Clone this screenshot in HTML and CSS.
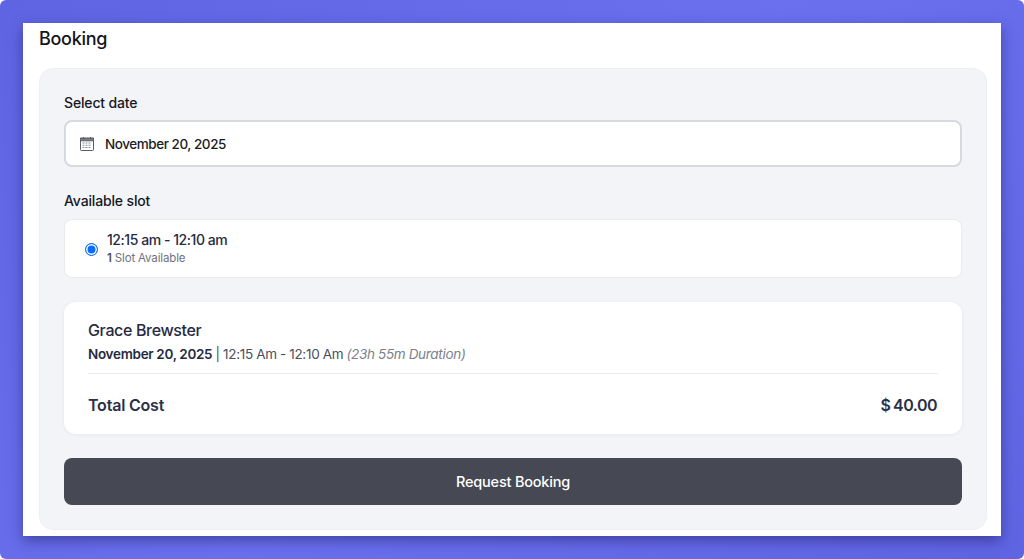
FILE: index.html
```html
<!DOCTYPE html>
<html lang="en">
<head>
<meta charset="utf-8">
<title>Booking</title>
<link rel="stylesheet" href="styles.css">
</head>
<body>
<div class="stage">
  <main class="sheet">
    <h1 class="title">Booking</h1>
    <section class="panel">
      <label class="label">Select date</label>
      <div class="date-input">
        <svg class="cal" viewBox="0 0 14 14" width="14" height="14" aria-hidden="true">
          <rect x="0.5" y="1.2" width="13" height="12.3" rx="0.8" fill="#fff" stroke="#5c5f68"/>
          <rect x="0.5" y="1.2" width="13" height="2.6" fill="#7b7e87" stroke="#5c5f68"/>
          <path d="M3.5 0v2M10.500 0v2" stroke="#5c5f68"/>
          <path d="M2.500 6h9M2.500 8.200h9M2.500 10.500h9" stroke="#8a8d95" stroke-width="1.100" stroke-dasharray="2 1"/>
        </svg>
        <span>November 20, 2025</span>
      </div>
      <label class="label label-slot">Available slot</label>
      <div class="slot">
        <span class="radio"></span>
        <div class="slot-text">
          <div class="slot-time">12:15 am - 12:10 am</div>
          <div class="slot-count"><b>1</b> Slot Available</div>
        </div>
      </div>
      <div class="summary">
        <div class="name">Grace Brewster</div>
        <div class="when"><b>November 20, 2025</b> | 12:15 Am - 12:10 Am <i>(23h 55m Duration)</i></div>
        <div class="total">
          <span>Total Cost</span>
          <span class="price">$ 40.00</span>
        </div>
      </div>
      <button class="submit" type="button">Request Booking</button>
    </section>
  </main>
</div>
</body>
</html>
```

FILE: styles.css
```css
* { box-sizing: border-box; }
html, body { margin: 0; height: 100%; background: #fff; }
body { overflow: hidden; font-family: "Inter", "Liberation Sans", sans-serif; }
.stage {
  height: 559px;
  padding: 23px;
  border-radius: 6px;
  background: linear-gradient(135deg, #5f64e2 0%, #6a70ee 50%, #5f64e2 100%);
}
.sheet {
  height: 513px;
  background: #fff;
  padding: 0 14px 0 16px;
  box-shadow: 0 5px 12px rgba(30, 30, 100, 0.5);
}
.title {
  margin: 0;
  height: 45px;
  padding-top: 5px;
  font-size: 18px;
  line-height: 22px;
  font-weight: 550;
  letter-spacing: -0.3px;
  color: #14161c;
}
.panel {
  height: 462px;
  padding: 25px 24px 0;
  background: #f3f4f8;
  border: 1px solid #eeeff3;
  border-radius: 14px;
  display: flex;
  flex-direction: column;
}
.label {
  font-size: 14px;
  line-height: 18px;
  font-weight: 550;
  letter-spacing: -0.15px;
  color: #16181e;
}
.date-input {
  margin-top: 8px;
  height: 47px;
  display: flex;
  align-items: center;
  gap: 11px;
  padding-left: 14px;
  background: #fff;
  border: 2px solid #d5d9e0;
  border-radius: 8px;
  font-size: 13.500px;
  font-weight: 500;
  letter-spacing: -0.45px;
  color: #1b1d24;
}
.cal { flex: none; }
.label-slot { margin-top: 25px; }
.slot {
  margin-top: 9px;
  height: 59px;
  display: flex;
  align-items: center;
  gap: 9px;
  padding-left: 20px;
  background: #fff;
  border: 1px solid #e9ebf0;
  border-radius: 8px;
}
.radio {
  width: 13px;
  height: 13px;
  margin-top: 1px;
  border-radius: 50%;
  background: #0a6cff;
  border: 1.500px solid #0a6cff;
  box-shadow: inset 0 0 0 1.500px #fff;
  flex: none;
}
.slot-time {
  font-size: 14px;
  line-height: 18px;
  font-weight: 550;
  letter-spacing: -0.45px;
  color: #262b43;
}
.slot-count {
  margin-top: 2px;
  font-size: 11.500px;
  line-height: 15px;
  letter-spacing: -0.15px;
  color: #6f7280;
}
.slot-count b { font-weight: 600; color: #4a4d5a; }
.summary {
  margin-top: 24px;
  height: 132px;
  padding: 18px 24px 0;
  background: #fff;
  border-radius: 12px;
  box-shadow: 0 1px 4px rgba(40, 45, 70, 0.06);
}
.name {
  font-size: 16px;
  line-height: 20px;
  font-weight: 500;
  letter-spacing: -0.35px;
  color: #262b43;
}
.when {
  margin-top: 5px;
  padding-bottom: 9px;
  font-size: 13.500px;
  line-height: 19px;
  letter-spacing: -0.3px;
  word-spacing: -0.2px;
  color: #4b4e5e;
  border-bottom: 1px solid #e9ebf0;
}
.when b { font-weight: 600; color: #262b43; }
.when i { color: #7c7f8c; }
.total {
  margin-top: 21px;
  display: flex;
  justify-content: space-between;
  padding-right: 1px;
  font-size: 16px;
  line-height: 20px;
  font-weight: 600;
  letter-spacing: -0.2px;
  color: #2b3048;
}
.price { letter-spacing: -0.5px; word-spacing: -1px; }
.submit {
  margin-top: 24px;
  height: 47px;
  border: 0;
  border-radius: 8px;
  background: #464853;
  color: #fff;
  font-family: inherit;
  font-size: 14.500px;
  font-weight: 550;
  letter-spacing: -0.2px;
}
```
